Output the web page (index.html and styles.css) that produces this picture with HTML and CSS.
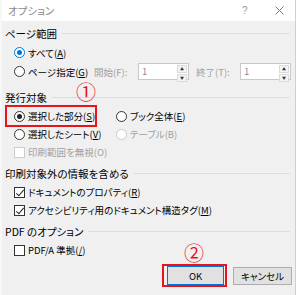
FILE: index.html
```html
<!DOCTYPE html>
<html lang="ja">
<head>
  <meta charset="UTF-8">
  <title>オプション</title>
  <link rel="stylesheet" href="styles.css">
</head>
<body>
  <div class="dialog">
    <div class="titlebar">
      <span class="title">オプション</span>
      <span class="help">?</span>
      <svg class="close" width="9" height="9" viewBox="0 0 9 9">
        <path d="M0.5 0.5 L8.5 8.5 M8.5 0.5 L0.5 8.5" stroke="#7a7a7a" stroke-width="1" fill="none"/>
      </svg>
    </div>

    <div class="content">
      <div class="group">ページ範囲</div>
      <div class="row first">
        <span class="radio checked focus"></span><span>すべて(<u>A</u>)</span>
      </div>
      <div class="row page">
        <span class="radio"></span><span class="opt">ページ指定(<u>G</u>)</span>
        <span class="spin-label">開始(F):</span>
        <span class="spin"><span class="val">1</span><span class="arrows"><i>▲</i><i>▼</i></span></span>
        <span class="spin-label end">終了(T):</span>
        <span class="spin"><span class="val">1</span><span class="arrows"><i>▲</i><i>▼</i></span></span>
      </div>

      <div class="group target">発行対象</div>
      <div class="row two">
        <div class="col marked"><span class="radio checked"></span><span>選択した部分(<u>S</u>)</span></div>
        <div class="col"><span class="radio"></span><span>ブック全体(<u>E</u>)</span></div>
      </div>
      <div class="row two">
        <div class="col"><span class="radio"></span><span>選択したシート(<u>V</u>)</span></div>
        <div class="col off"><span class="radio"></span><span>テーブル(B)</span></div>
      </div>
      <div class="row off">
        <span class="check"></span><span>印刷範囲を無視(O)</span>
      </div>

      <div class="group">印刷対象外の情報を含める</div>
      <div class="row">
        <span class="check on"></span><span>ドキュメントのプロパティ(<u>R</u>)</span>
      </div>
      <div class="row">
        <span class="check on"></span><span>アクセシビリティ用のドキュメント構造タグ(<u>M</u>)</span>
      </div>

      <div class="group">PDF のオプション</div>
      <div class="row">
        <span class="check"></span><span>PDF/A 準拠(<u>/</u>)</span>
      </div>

      <div class="buttons">
        <div class="ok-wrap"><button class="default">OK</button></div>
        <button>キャンセル</button>
      </div>
    </div>

    <span class="num n1">①</span>
    <span class="num n2">②</span>
  </div>
</body>
</html>
```

FILE: styles.css
```css
* {
  box-sizing: border-box;
}

body {
  margin: 0;
  background: #fff;
  font-family: "Noto Sans CJK JP", "Noto Sans", sans-serif;
  font-size: 9.5px;
  font-feature-settings: "palt";
  color: #000;
  white-space: nowrap;
}

.dialog {
  position: relative;
  width: 296px;
  height: 295px;
  background: #f0f0f0;
  border-right: 1px solid #cfcfcf;
  border-left: 2px solid #f8f8f8;
}

.titlebar {
  height: 21px;
  background: #fff;
  display: flex;
  align-items: center;
  padding-left: 6px;
  font-size: 10.5px;
  color: #8a8a8a;
}

.title {
  flex: 1;
}

.help {
  width: 6px;
  margin-right: 27px;
  font-family: "Liberation Sans", sans-serif;
  font-size: 10px;
  color: #999;
}

.close {
  margin-right: 11px;
}

.content {
  padding: 0 3px 0 3px;
}

.group {
  display: flex;
  align-items: center;
  height: 20px;
  margin: 2px 2px 0 0;
  font-size: 10.5px;
}

.group::after {
  content: "";
  flex: 1;
  height: 1px;
  margin-left: 5px;
  background: #dcdcdc;
}

.group.target {
  margin-top: 6px;
}

.row {
  display: flex;
  align-items: center;
  height: 18px;
  padding-left: 9px;
}

.row.first,
.row.page {
  height: 19px;
}

.row.two {
  padding-left: 2px;
}

.col {
  display: flex;
  align-items: center;
  height: 18px;
}

.col:first-child {
  width: 88px;
  margin-right: 21px;
  padding-left: 7px;
}

.radio,
.check {
  width: 11px;
  height: 11px;
  margin-right: 3px;
  border: 1px solid #333;
  background: #fff;
  position: relative;
  flex: none;
}

.radio {
  border-radius: 50%;
}

.radio.checked::after {
  content: "";
  position: absolute;
  left: 2px;
  top: 2px;
  width: 5px;
  height: 5px;
  border-radius: 50%;
  background: #222;
}

.radio.focus {
  border-color: #0078d7;
}

.radio.focus::after {
  background: #0078d7;
}

.check.on::after {
  content: "";
  position: absolute;
  left: 3px;
  top: 0;
  width: 3px;
  height: 7px;
  border: solid #222;
  border-width: 0 1.5px 1.5px 0;
  transform: rotate(40deg);
}

.off {
  color: #a0a0a0;
}

.off .radio,
.off .check {
  border-color: #cccccc;
}

u {
  text-decoration-thickness: 1px;
  text-underline-offset: 1px;
}

.opt {
  width: 66px;
}

.spin-label {
  width: 44px;
  color: #a0a0a0;
}

.spin-label.end {
  margin-left: 7px;
}

.spin {
  display: flex;
  width: 51px;
  height: 17px;
  border: 1px solid #c8c8c8;
  background: #fff;
}

.spin .val {
  flex: 1;
  padding-left: 3px;
  line-height: 15px;
  color: #8a8a8a;
}

.arrows {
  display: flex;
  flex-direction: column;
  width: 12px;
  padding: 1px;
  gap: 1px;
}

.arrows i {
  flex: 1;
  font-style: normal;
  font-size: 4px;
  line-height: 6px;
  text-align: center;
  color: #333;
  background: #f4f4f4;
  border: 1px solid #dadada;
}

.marked {
  outline: 2px solid #e8141c;
}

.buttons {
  display: flex;
  justify-content: flex-end;
  align-items: center;
  gap: 6px;
  margin-top: 5px;
}

.ok-wrap {
  height: 23px;
  padding: 0 1px 0 3px;
  border: 2px solid #e8141c;
}

button {
  width: 59px;
  height: 18px;
  padding: 0;
  border: 1px solid #adadad;
  background: #e1e1e1;
  font-family: inherit;
  font-size: 9.5px;
  font-feature-settings: "palt";
  color: #000;
}

button.default {
  width: 57px;
  height: 19px;
  border-color: #0078d7;
}

.num {
  position: absolute;
  color: #e8141c;
  font-size: 20px;
  line-height: 1;
}

.n1 {
  left: 74px;
  top: 82px;
}

.n2 {
  left: 182px;
  top: 243px;
}
```
